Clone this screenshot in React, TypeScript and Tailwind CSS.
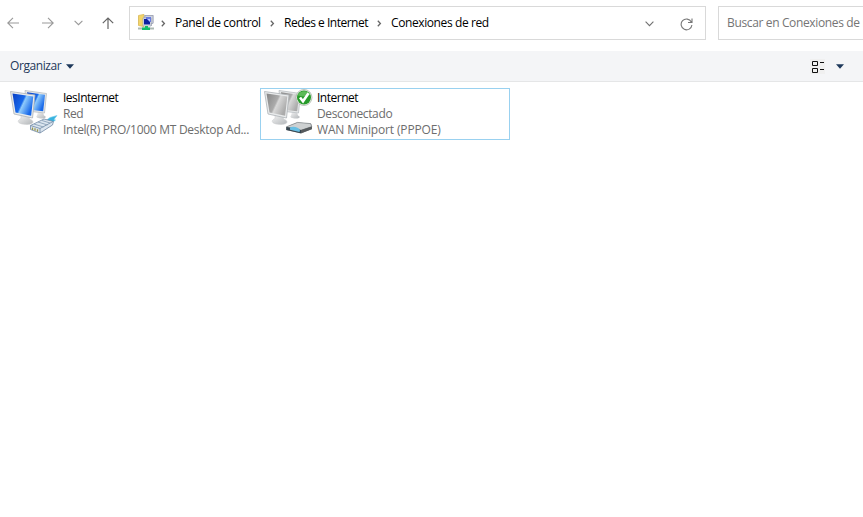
import React from "react";

function Monitors({ gray = false }: { gray?: boolean }) {
  const id = gray ? "gray" : "blue";
  const dark = gray ? "#858585" : "#0a3fc4";
  const mid = gray ? "#ababab" : "#1768ea";
  const light = gray ? "#d8d8d8" : "#8fcbfb";
  return (
    <>
      <defs>
        <linearGradient id={id} x1="0" y1="0" x2="1" y2="0.5">
          <stop offset="0" stopColor={dark} />
          <stop offset="0.52" stopColor={mid} />
          <stop offset="0.6" stopColor={light} />
          <stop offset="1" stopColor={mid} />
        </linearGradient>
        <linearGradient id={id + "Stand"} x1="0" y1="0" x2="1" y2="1">
          <stop offset="0" stopColor="#f4f4f4" />
          <stop offset="1" stopColor="#b2b6b9" />
        </linearGradient>
      </defs>
      <path d="M31 23l5 .5 1 3c3 1 2 3-2 3s-7-1-5-3z" fill={`url(#${id}Stand)`} />
      <path d="M18 1.500l21.500 3L37.500 24 20 22z" fill="#e5e7e8" stroke="#b9bec2" strokeWidth=".8" />
      <path d="M20 3.300l18 2.500-1.800 16.500-14-1.600z" fill={`url(#${id})`} />
      <path d="M14 26l8 1 .5 3c5 1.500 5 5.500-2.500 5.500-7.500 0-12-3-6-6z" fill={`url(#${id}Stand)`} stroke="#c8cacc" strokeWidth=".5" />
      <path d="M3.500 2.500L28 6l-2.500 23L7 25z" fill="#e9ebec" stroke="#adb2b6" strokeWidth=".8" />
      <path d="M5.500 4.500L26.300 7.500l-2.200 19.200L8.500 23.500z" fill={`url(#${id})`} />
    </>
  );
}

function LanIcon() {
  return (
    <svg width="54" height="50" viewBox="0 0 54 50" className="block">
      <Monitors />
      <path d="M39 31.500l4-3 7-2-3 4 1.500.5-2.500 2-4 1.500z" fill="#38b3df" stroke="#77cdec" strokeWidth=".6" />
      <path d="M23.500 36.500L37 30l9.500 2.500-1 3.500L33 44l-9.500-3.500z" fill="#dbe5ef" stroke="#7189a4" strokeWidth=".8" />
      <path d="M23.500 36.500l9.500 3 13-7M33 39.500V44" fill="none" stroke="#6f88a3" strokeWidth=".8" />
      <path d="M27 35l9.500 3M31 33l9.500 3M35 31.500l8 2.500" stroke="#8aa1b9" strokeWidth=".9" />
      <path d="M25.500 38.500V41M28 39.300v2.500M30.500 40.200v2.500" stroke="#9a984f" strokeWidth="1.300" />
    </svg>
  );
}

function ModemIcon() {
  return (
    <svg width="54" height="50" viewBox="0 0 54 50" className="block">
      <Monitors gray />
      <path d="M25 38l11-4.500 14 1 1 3V40l-11 4.500-15-3.500z" fill="#777b7e" />
      <path d="M25.500 37.800l11-4.400 13 1.200 1.300 3-10.800 3.700z" fill="#cdd0d1" stroke="#84898d" strokeWidth=".7" />
      <path d="M25.500 38L40 41v3.300L25.500 41z" fill="#35454f" />
      <path d="M29 38.500c3-1.700 9-.2 10 2.500l-.5 2-9.500-2.200z" fill="#67bfe4" />
      <path d="M40 41l10.800-3.500v2.700L40 44.300z" fill="#565a5d" />
      <circle cx="43" cy="8.500" r="8" fill="#eef3ec" stroke="#a3aca0" strokeWidth=".7" />
      <circle cx="43" cy="8.500" r="7" fill="#279b2a" />
      <path d="M37 6.500c1-5 10-6 12-1l-7 2z" fill="#75c86c" opacity=".7" />
      <path d="M39 8.500l3 3.800 5.500-8" fill="none" stroke="white" strokeWidth="2.600" />
    </svg>
  );
}

function NetworkFolder() {
  return (
    <svg width="16" height="17" viewBox="0 0 16 17" className="block">
      <path d="M.5 1.500L6 .5v12l-5.500-1z" fill="#f3d568" stroke="#dec067" />
      <path d="M6 1h9.500v8H14v3H5V3h1z" fill="#b9bec8" />
      <path d="M7 1.500h8v8H7z" fill="#ccd1df" stroke="#999faf" strokeWidth=".7" />
      <path d="M5 4h8v8H5z" fill="#e2e5ee" stroke="#989dac" strokeWidth=".7" />
      <path d="M8 3h5v5H8z" fill="#687be0" />
      <path d="M6 5h6v5.500H6z" fill="#0c20a1" />
      <path d="M9 5h3v3z" fill="#b8c7ff" />
      <path d="M0 14.500h16" stroke="#acb9b3" strokeWidth="2" />
      <path d="M7 12h3v1.500h2V16H4v-2.500h3z" fill="#12bd69" />
    </svg>
  );
}

function Chevron() {
  return <svg width="5" height="7" viewBox="0 0 5 7" className="mt-px block shrink-0"><path d="M.8 .8l2.600 2.700L.8 6.200" fill="none" stroke="#666" strokeWidth="1.300" /></svg>;
}

function Triangle() {
  return <svg width="8" height="5" viewBox="0 0 8 5" className="block shrink-0"><path d="M0 .3h8L4 4.700z" fill="#1e395b" /></svg>;
}

export default function App() {
  return (
    <main className="h-[517px] w-[863px] overflow-hidden bg-white font-['Open_Sans','Noto_Sans',sans-serif] text-[12px] leading-4 whitespace-nowrap text-black">
      <header className="flex h-[51px] pt-[6px]">
        <nav className="flex h-[34px] w-[129px] shrink-0 items-center pl-[7px]">
          <svg width="12" height="12" viewBox="0 0 12 12" className="shrink-0"><path d="M12 6H1M6 .8L.8 6 6 11.200" fill="none" stroke="#999" strokeWidth="1.100" /></svg>
          <svg width="12" height="12" viewBox="0 0 12 12" className="ml-[23px] shrink-0"><path d="M0 6h11M6 .8L11.200 6 6 11.200" fill="none" stroke="#999" strokeWidth="1.100" /></svg>
          <svg width="9" height="6" viewBox="0 0 9 6" className="ml-[20px] shrink-0"><path d="M.6.8l3.900 3.900L8.400.8" fill="none" stroke="#999" strokeWidth="1.100" /></svg>
          <svg width="12" height="12" viewBox="0 0 12 12" className="ml-[18.5px] shrink-0"><path d="M6 12V1M.8 6.200L6 1l5.200 5.200" fill="none" stroke="#666" strokeWidth="1.200" /></svg>
        </nav>
        <div className="flex h-[34px] w-[577px] shrink-0 items-center border border-[#d9d9d9] pl-[8px]">
          <div className="-mt-px"><NetworkFolder /></div>
          <span className="ml-[7px] w-[5px]"><Chevron /></span>
          <span className="ml-[9px] w-[87px] tracking-[-0.33px]">Panel de control</span>
          <span className="ml-[8px] w-[5px]"><Chevron /></span>
          <span className="ml-[9px] w-[85px] tracking-[-0.5px]">Redes e Internet</span>
          <span className="ml-[8px] w-[5px]"><Chevron /></span>
          <span className="ml-[9px] w-[99px] tracking-[-0.4px]">Conexiones de red</span>
          <svg width="9" height="6" viewBox="0 0 9 6" className="mt-[2px] ml-[155px] shrink-0"><path d="M.6.7l3.900 3.900L8.400.7" fill="none" stroke="#707070" strokeWidth="1.100" /></svg>
          <svg width="13" height="13" viewBox="0 0 13 13" className="mt-[2px] ml-[26px] shrink-0"><path d="M11.300 3.900A5.400 5.400 0 1 0 11.900 7M12 .5v4H8" fill="none" stroke="#777" strokeWidth="1.100" /></svg>
        </div>
        <div className="ml-[12px] flex h-[34px] w-[180px] shrink-0 items-center border border-[#d9d9d9] pl-[8px] tracking-[-0.36px] text-[#757575]">Buscar en Conexiones de red</div>
      </header>
      <section className="flex h-[31px] items-center border-b border-[#e5e6e7] bg-[#f4f5f7] pl-[10px] text-[#1e395b]">
        <span className="w-[52px] tracking-[-0.43px]">Organizar</span>
        <span className="ml-[4px]"><Triangle /></span>
        <svg width="15" height="15" viewBox="0 0 15 15" className="ml-[736px] shrink-0">
          <path d="M0 0h15v15H0z" fill="#f0f0f0" />
          <path d="M2.500 2.500h5v4h-5zM2.500 9.500h5v4h-5zM10 3.500h4M10 10.500h4" fill="none" stroke="#111" />
        </svg>
        <span className="ml-[11px]"><Triangle /></span>
      </section>
      <section className="flex pt-[6px] pl-[7px]">
        <article className="flex h-[52px] w-[253px] shrink-0 pt-[1px]">
          <LanIcon />
          <div className="ml-[2px] pt-px">
            <div className="tracking-[-0.5px]">IesInternet</div>
            <div className="tracking-[-0.4px] text-[#6d6d6d]">Red</div>
            <div className="tracking-[-0.28px] text-[#6d6d6d]">Intel(R) PRO/1000 MT Desktop Ad...</div>
          </div>
        </article>
        <article className="flex h-[52px] w-[250px] shrink-0 border border-[#99d1f0]">
          <ModemIcon />
          <div className="ml-[2px] pt-px">
            <div className="tracking-[-0.5px]">Internet</div>
            <div className="tracking-[-0.35px] text-[#6d6d6d]">Desconectado</div>
            <div className="tracking-[-0.15px] text-[#6d6d6d]">WAN Miniport (PPPOE)</div>
          </div>
        </article>
      </section>
    </main>
  );
}
